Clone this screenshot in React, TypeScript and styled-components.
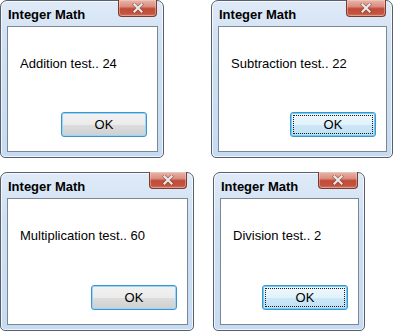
import React from "react";
import styled, { createGlobalStyle } from "styled-components";

const Global = createGlobalStyle`
  html, body { margin: 0; padding: 0; background: #ffffff; }
  body { font-family: "Liberation Sans", Arial, sans-serif; }
`;

const Page = styled.div`
  display: flex;
  flex-direction: column;
  gap: 14px;
  width: 396px;
  height: 331px;
  overflow: hidden;
`;

const Row = styled.div<{ $gap: number }>`
  display: flex;
  align-items: flex-start;
  gap: ${(p) => p.$gap}px;
`;

const Frame = styled.div<{ $w: number; $h: number }>`
  box-sizing: border-box;
  width: ${(p) => p.$w}px;
  height: ${(p) => p.$h}px;
  display: flex;
  flex-direction: column;
  border: 1px solid #56606c;
  border-radius: 7px 7px 5px 5px;
  background: linear-gradient(180deg, #dfeaf7 0%, #cfe0f3 30%, #c6dbf2 100%);
  box-shadow: inset 0 0 0 1px rgba(255, 255, 255, 0.7);
`;

const TitleBar = styled.div`
  height: 25px;
  display: flex;
  align-items: flex-start;
  padding-left: 7px;
  padding-right: 6px;
`;

const Title = styled.span`
  font-weight: bold;
  font-size: 13px;
  color: #000;
  margin-top: 6px;
  line-height: 15px;
`;

const Close = styled.div<{ $w: number }>`
  margin-left: auto;
  margin-top: -1px;
  width: ${(p) => p.$w}px;
  height: 17px;
  box-sizing: border-box;
  border: 1px solid #7a3a30;
  border-top: none;
  border-radius: 0 0 4px 4px;
  background: linear-gradient(
    180deg,
    #e9b5aa 0%,
    #d98f81 40%,
    #c24a35 55%,
    #c35540 85%,
    #d07a66 100%
  );
  box-shadow: inset 0 0 0 1px rgba(255, 220, 210, 0.4);
  display: flex;
  align-items: center;
  justify-content: center;
`;

const Content = styled.div`
  flex: 1;
  margin: 0 5px 5px 6px;
  border: 1px solid #7c8795;
  background: #ffffff;
  display: flex;
  flex-direction: column;
  padding: 29px 10px 14px 12px;
`;

const Message = styled.div`
  font-size: 13px;
  line-height: 15px;
  color: #000;
  white-space: nowrap;
`;

const OkButton = styled.div<{ $focused: boolean }>`
  margin-top: auto;
  align-self: flex-end;
  box-sizing: border-box;
  width: 86px;
  height: 25px;
  border: 1px solid #3c95cf;
  border-radius: 3px;
  background: ${(p) =>
    p.$focused
      ? "linear-gradient(180deg, #eef7fc 0%, #e2f2fb 50%, #cde8f7 51%, #bfe0f3 100%)"
      : "linear-gradient(180deg, #f2f2f2 0%, #ebebeb 50%, #dddddd 51%, #cfcfcf 100%)"};
  box-shadow: inset 0 0 0 1px ${(p) => (p.$focused ? "#6fcdf2" : "#9ad5f3")};
  display: flex;
  align-items: center;
  justify-content: center;
  padding: 2px;
`;

const FocusRect = styled.div<{ $focused: boolean }>`
  flex: 1;
  align-self: stretch;
  display: flex;
  align-items: center;
  justify-content: center;
  border: 1px dotted ${(p) => (p.$focused ? "#1a1a1a" : "transparent")};
  font-size: 13px;
  color: #000;
`;

const XIcon = () => (
  <svg width="12" height="10" viewBox="0 0 12 10">
    <path
      d="M2.5 1.5 L9.5 8.5 M9.5 1.5 L2.5 8.5"
      stroke="#5a2a24"
      strokeWidth="3.6"
      strokeLinecap="square"
      opacity="0.45"
    />
    <path
      d="M2.5 1.5 L9.5 8.5 M9.5 1.5 L2.5 8.5"
      stroke="#e8e8e8"
      strokeWidth="2.2"
      strokeLinecap="square"
    />
  </svg>
);

type BoxProps = {
  w: number;
  h: number;
  closeW: number;
  text: string;
  focused: boolean;
};

const MessageBox = ({ w, h, closeW, text, focused }: BoxProps) => (
  <Frame $w={w} $h={h}>
    <TitleBar>
      <Title>Integer Math</Title>
      <Close $w={closeW}>
        <XIcon />
      </Close>
    </TitleBar>
    <Content>
      <Message>{text}</Message>
      <OkButton $focused={focused}>
        <FocusRect $focused={focused}>OK</FocusRect>
      </OkButton>
    </Content>
  </Frame>
);

export default function App() {
  return (
    <>
      <Global />
      <Page>
        <Row $gap={47}>
          <MessageBox w={164} h={158} closeW={39} text="Addition test.. 24" focused={false} />
          <MessageBox w={182} h={158} closeW={40} text="Subtraction test.. 22" focused={true} />
        </Row>
        <Row $gap={19}>
          <MessageBox w={194} h={159} closeW={38} text="Multiplication test.. 60" focused={false} />
          <MessageBox w={152} h={159} closeW={40} text="Division test.. 2" focused={true} />
        </Row>
      </Page>
    </>
  );
}
